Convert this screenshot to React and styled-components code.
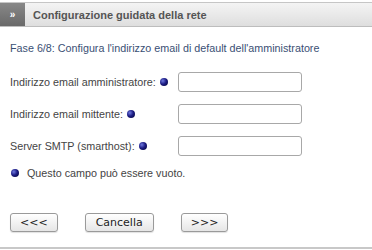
import React from 'react'
import styled, { createGlobalStyle } from 'styled-components'

const GlobalStyle = createGlobalStyle`
  html, body {
    margin: 0;
    padding: 0;
    background: #ffffff;
  }
  body {
    font-family: "Liberation Sans", Arial, sans-serif;
  }
`;

const Page = styled.div`
  width: 372px;
  height: 245px;
  padding-top: 2px;
  border-bottom: 2px solid #c8c8c8;
  box-sizing: content-box;
  display: flex;
  flex-direction: column;
`;

const Header = styled.div`
  display: flex;
  align-items: stretch;
  height: 23px;
  border-top: 1px solid #c6c6c6;
  border-bottom: 1px solid #bdbdbd;
  background: linear-gradient(#f4f4f4, #dedede);
`;

const HeaderIcon = styled.div`
  width: 25px;
  display: flex;
  align-items: center;
  justify-content: center;
  background: linear-gradient(#888888, #696969);
  color: #ffffff;
  font-size: 10px;
  font-weight: bold;
`;

const HeaderTitle = styled.div`
  display: flex;
  align-items: center;
  padding-left: 8px;
  font-size: 11px;
  font-weight: bold;
  color: #555555;
`;

const Step = styled.div`
  margin: 15px 0 0 10px;
  font-size: 10.75px;
  color: #3a4f74;
`;

const Form = styled.div`
  display: flex;
  flex-direction: column;
  gap: 12px;
  margin: 18px 0 0 10px;
`;

const Row = styled.div`
  display: flex;
  align-items: center;
  height: 20px;
`;

const Label = styled.div`
  width: 168px;
  display: flex;
  align-items: center;
  gap: 4px;
  font-size: 10.75px;
  color: #444444;
`;

const Dot = styled.span`
  display: inline-block;
  flex: none;
  width: 8px;
  height: 8px;
  border-radius: 50%;
  background: radial-gradient(circle at 35% 35%, #6f79de 0%, #1d1d85 45%, #00002e 100%);
`;

const Field = styled.input`
  width: 124px;
  height: 20px;
  box-sizing: border-box;
  border: 1px solid #a8a8a8;
  border-radius: 3px;
  background: #ffffff;
  padding: 0 4px;
  outline: none;
`;

const Note = styled.div`
  display: flex;
  align-items: center;
  gap: 8px;
  margin: 11px 0 0 11px;
  font-size: 10.75px;
  color: #444444;
`;

const Buttons = styled.div`
  display: flex;
  gap: ${p => p.$gap}px;
  margin: 34px 0 0 10px;
`;

const Button = styled.button`
  height: 19px;
  padding: 0 ${p => p.$pad}px;
  border: 1px solid #9a9a9a;
  border-radius: 3px;
  background: linear-gradient(#ffffff, #e6e6e6);
  box-shadow: 0 1px 1px rgba(0, 0, 0, 0.12);
  font-family: "DejaVu Sans", Verdana, sans-serif;
  font-size: 11px;
  color: #222222;
  line-height: 17px;
`;

export default function App() {
  return (
    <>
      <GlobalStyle />
      <Page>
        <Header>
          <HeaderIcon>»</HeaderIcon>
          <HeaderTitle>Configurazione guidata della rete</HeaderTitle>
        </Header>
        <Step>Fase 6/8: Configura l'indirizzo email di default dell'amministratore</Step>
        <Form>
          <Row>
            <Label>Indirizzo email amministratore: <Dot /></Label>
            <Field type="text" />
          </Row>
          <Row>
            <Label>Indirizzo email mittente: <Dot /></Label>
            <Field type="text" />
          </Row>
          <Row>
            <Label>Server SMTP (smarthost): <Dot /></Label>
            <Field type="text" />
          </Row>
        </Form>
        <Note><Dot /> Questo campo può essere vuoto.</Note>
        <Buttons $gap={27}>
          <Button $pad={9}>&lt;&lt;&lt;</Button>
          <Button $pad={10}>Cancella</Button>
          <Button $pad={9}>&gt;&gt;&gt;</Button>
        </Buttons>
      </Page>
    </>
  )
}
